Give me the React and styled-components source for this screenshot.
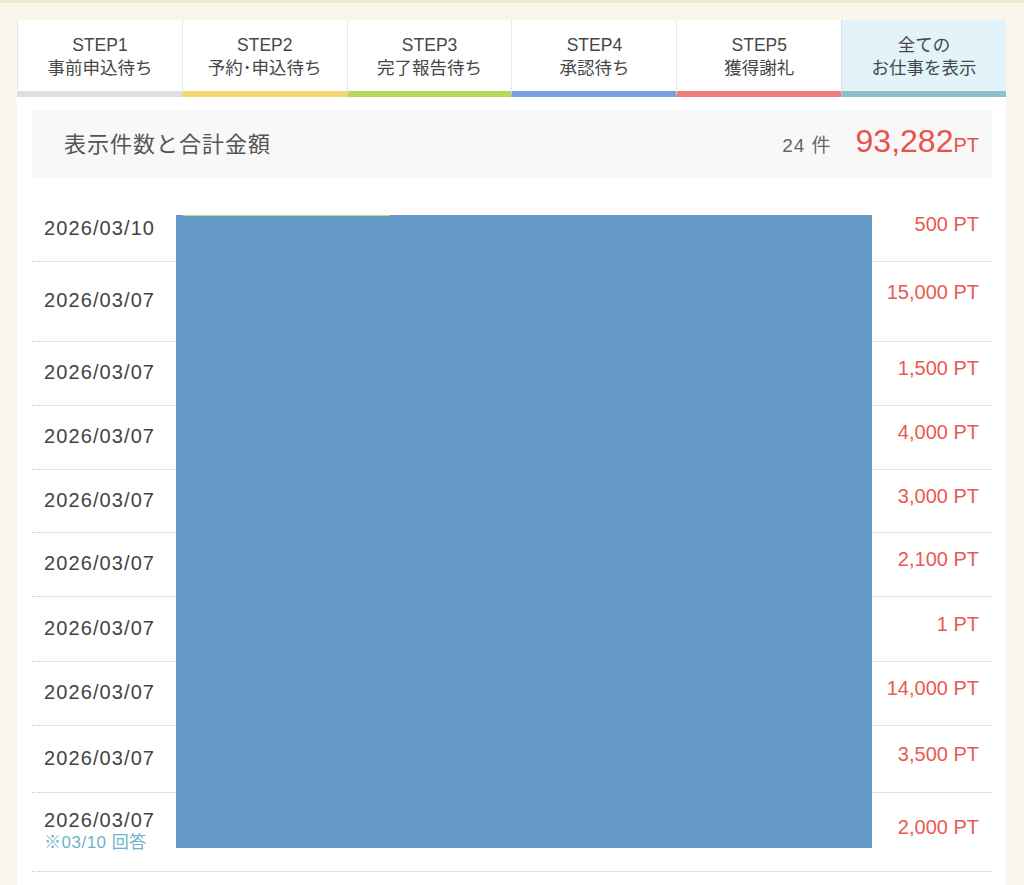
import React from 'react'
import styled, { createGlobalStyle } from 'styled-components'

const GlobalStyle = createGlobalStyle`
  html, body {
    margin: 0;
    padding: 0;
    background: #faf6ec;
  }
  body {
    font-family: "Liberation Sans", "Noto Sans CJK JP", sans-serif;
    color: #444;
  }
`

const tabs = [
  { top: 'STEP1', bottom: '事前申込待ち', bar: '#dedede' },
  { top: 'STEP2', bottom: '予約･申込待ち', bar: '#efd66e' },
  { top: 'STEP3', bottom: '完了報告待ち', bar: '#b9d95a' },
  { top: 'STEP4', bottom: '承認待ち', bar: '#7c9fe2' },
  { top: 'STEP5', bottom: '獲得謝礼', bar: '#ec7e7c' },
  { top: '全ての', bottom: 'お仕事を表示', bar: '#8fbfce', active: true },
]

const rows = [
  { date: '2026/03/10', amount: '500 PT', h: 65 },
  { date: '2026/03/07', amount: '15,000 PT', h: 80, lift: 4 },
  { date: '2026/03/07', amount: '1,500 PT', h: 64 },
  { date: '2026/03/07', amount: '4,000 PT', h: 64 },
  { date: '2026/03/07', amount: '3,000 PT', h: 63 },
  { date: '2026/03/07', amount: '2,100 PT', h: 64 },
  { date: '2026/03/07', amount: '1 PT', h: 65 },
  { date: '2026/03/07', amount: '14,000 PT', h: 64 },
  { date: '2026/03/07', amount: '3,500 PT', h: 67 },
  { date: '2026/03/07', amount: '2,000 PT', h: 79, note: '※03/10 回答' },
]

export default function App() {
  return (
    <Page>
      <GlobalStyle />
      <TopBand />
      <Panel>
        <TabBar>
          {tabs.map((t, i) => (
            <Tab key={i} $bar={t.bar} $active={t.active}>
              <span>{t.top}</span>
              <span>{t.bottom}</span>
            </Tab>
          ))}
        </TabBar>
        <Summary>
          <SummaryLabel>表示件数と合計金額</SummaryLabel>
          <SummaryRight>
            <Count>24 件</Count>
            <Total>93,282</Total>
            <TotalUnit>PT</TotalUnit>
          </SummaryRight>
        </Summary>
        <List>
          {rows.map((r, i) => (
            <Row key={i} $h={r.h}>
              <DateCol>
                <DateText>{r.date}</DateText>
                {r.note && <Note>{r.note}</Note>}
              </DateCol>
              <Amount $lift={r.lift || 0}>{r.amount}</Amount>
            </Row>
          ))}
          <Cover />
        </List>
      </Panel>
    </Page>
  )
}

const Page = styled.div`
  min-height: 885px;
  overflow: hidden;
`

const TopBand = styled.div`
  height: 3px;
  background: #f2ead5;
`

const Panel = styled.div`
  margin: 17px 18px 0 17px;
  background: #fff;
  min-height: 880px;
`

const TabBar = styled.div`
  display: grid;
  grid-template-columns: repeat(6, 1fr);
  height: 77px;
`

const Tab = styled.div`
  display: flex;
  flex-direction: column;
  align-items: center;
  justify-content: center;
  padding: 4px 0 2px;
  box-sizing: border-box;
  background: ${p => (p.$active ? '#e3f3fa' : '#fff')};
  border-left: 1px dotted #cfcfcf;
  border-bottom: 6px solid ${p => p.$bar};
  font-size: 17.5px;
  line-height: 23px;
  color: #474747;
  text-align: center;
`

const Summary = styled.div`
  margin: 14px 14px 0 15px;
  height: 66px;
  box-sizing: border-box;
  background: #f8f8f8;
  display: flex;
  align-items: center;
  justify-content: space-between;
  padding: 0 13px 5px 32px;
`

const SummaryLabel = styled.div`
  font-size: 22px;
  letter-spacing: 1px;
  color: #555;
`

const SummaryRight = styled.div`
  display: flex;
  align-items: baseline;
`

const Count = styled.span`
  font-size: 19px;
  color: #666;
  letter-spacing: 1px;
  margin-right: 24px;
`

const Total = styled.span`
  font-size: 32px;
  color: #e8524b;
`

const TotalUnit = styled.span`
  font-size: 20px;
  color: #e8524b;
`

const List = styled.div`
  position: relative;
  margin: 0 14px 0 15px;
  padding-top: 20px;
`

const Row = styled.div`
  height: ${p => p.$h}px;
  box-sizing: border-box;
  border-bottom: 1px dotted #c8c8c8;
  display: flex;
  align-items: center;
  justify-content: space-between;
  padding: 0 13px 2px 12px;
`

const DateCol = styled.div`
  display: flex;
  flex-direction: column;
`

const DateText = styled.span`
  font-size: 20px;
  letter-spacing: 1.1px;
  color: #444;
  line-height: 23px;
`

const Note = styled.span`
  font-size: 17px;
  line-height: 22px;
  color: #6eb2c9;
  letter-spacing: 0.5px;
`

const Amount = styled.span`
  font-size: 20px;
  color: #ea5a52;
  position: relative;
  top: ${p => -4 - p.$lift}px;
`

const Cover = styled.div`
  position: absolute;
  left: 144px;
  top: 38px;
  width: 696px;
  height: 633px;
  background: #6499c7;
  &::before {
    content: '';
    position: absolute;
    left: 7px;
    top: 0;
    width: 207px;
    height: 1px;
    background: #cfd090;
  }
`
